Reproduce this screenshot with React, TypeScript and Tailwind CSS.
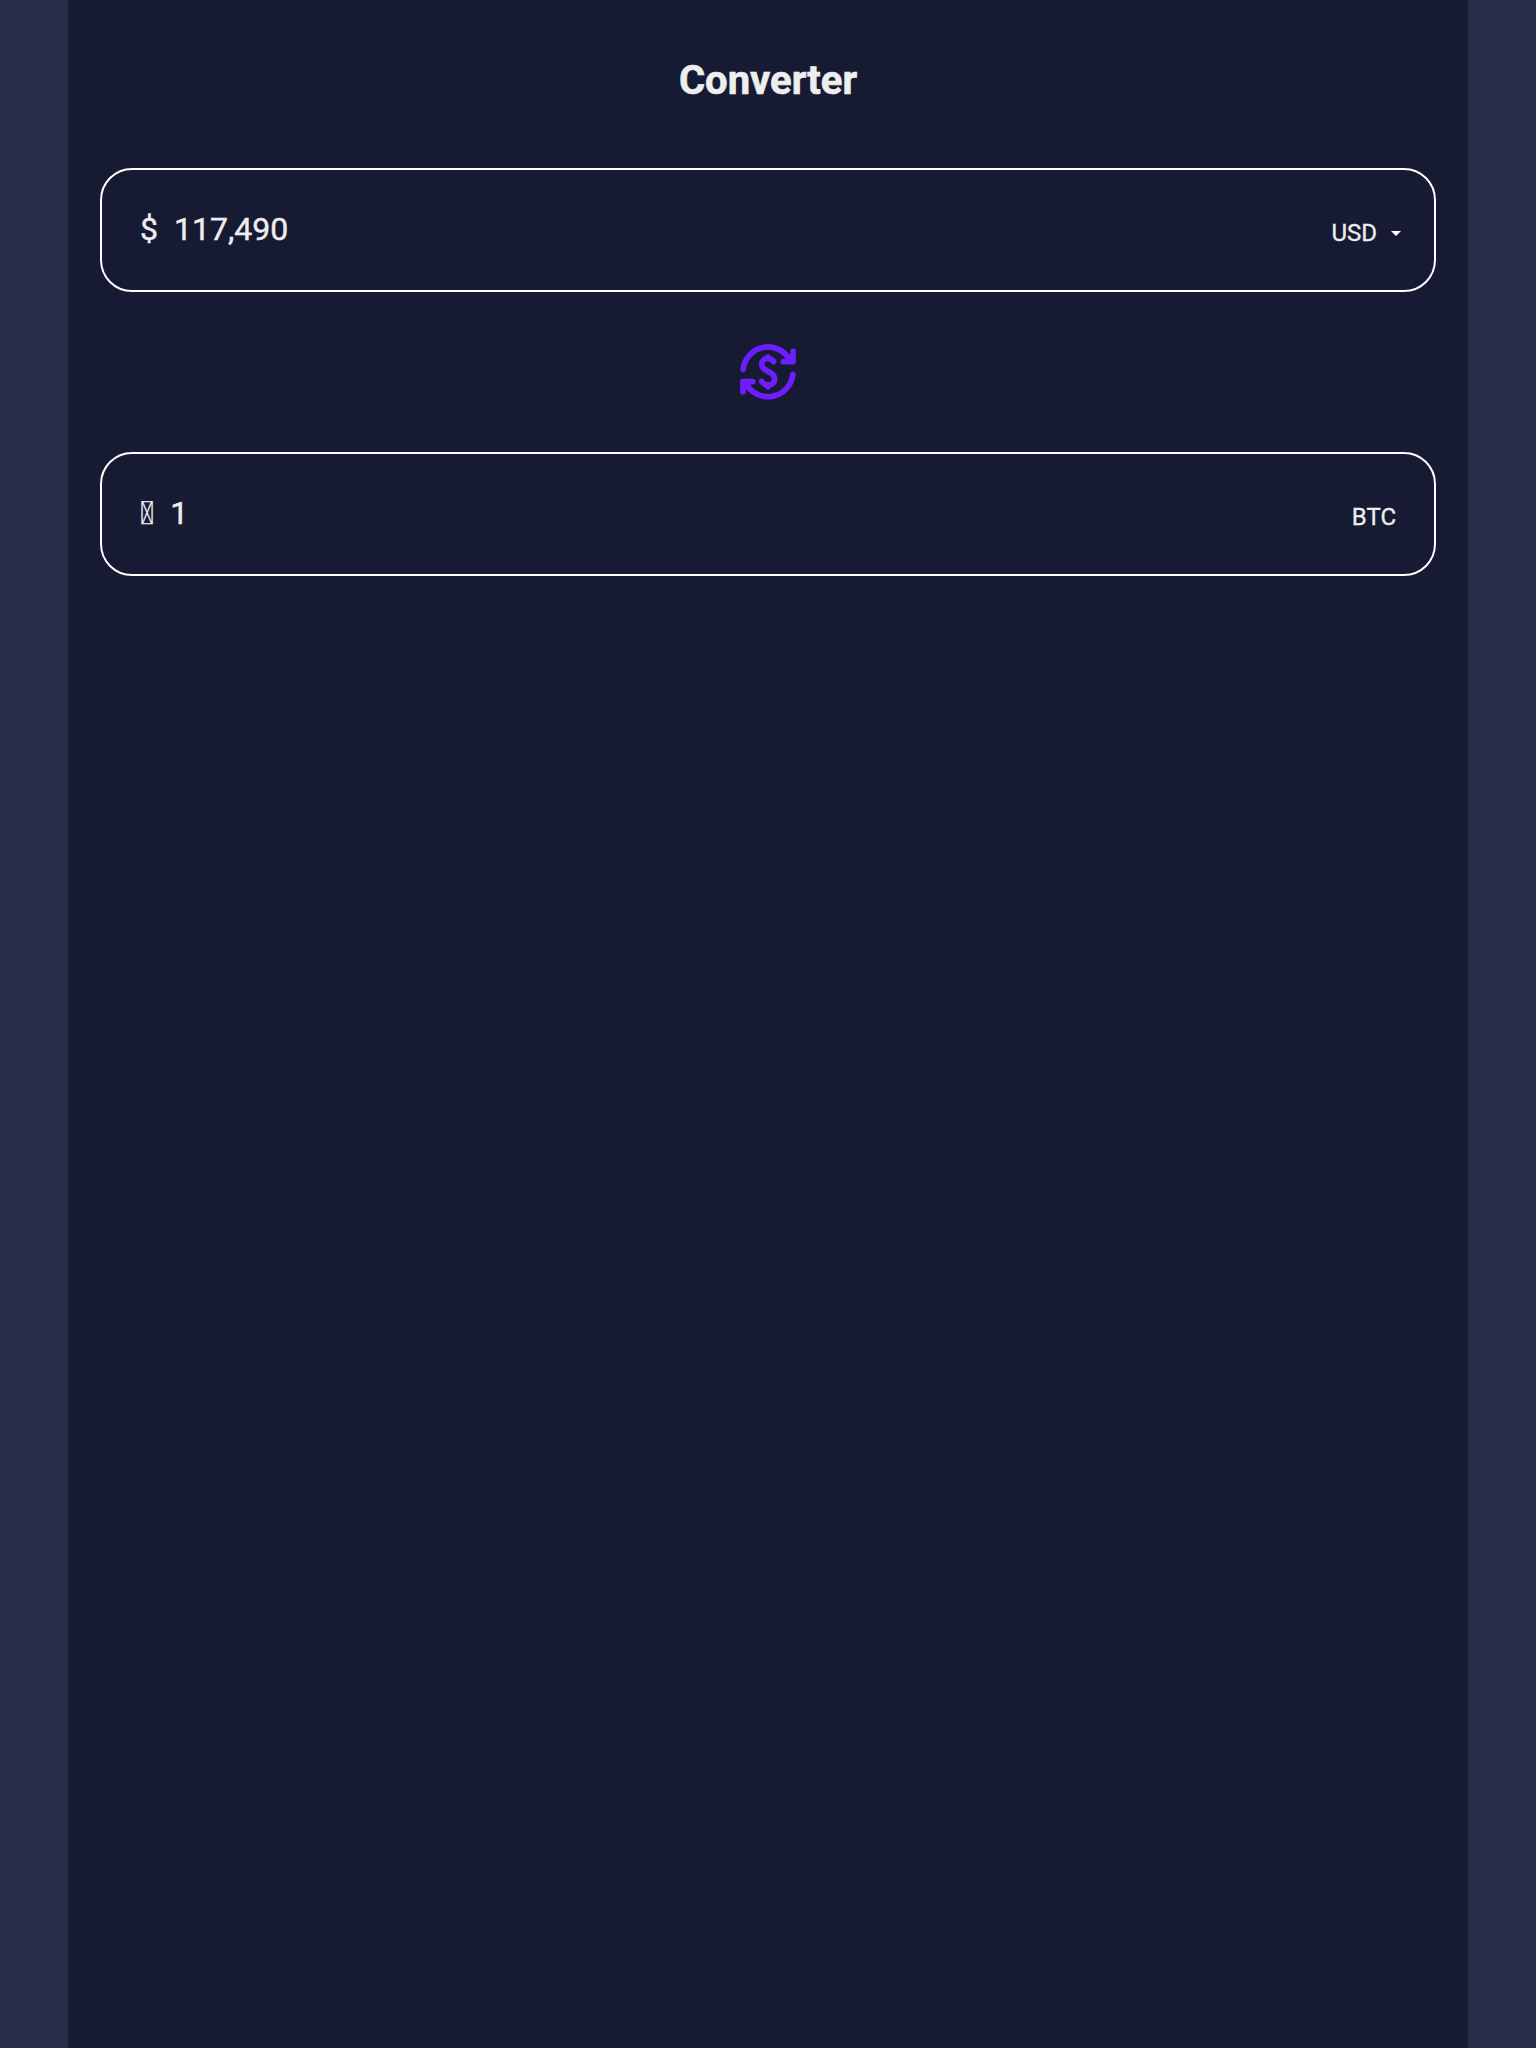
import type { ReactNode } from "react";

function ConvertIcon() {
  return (
    <svg
      viewBox="0 0 240 240"
      className="h-20 w-20"
      fill="none"
      stroke="#6f1dfd"
      strokeWidth="17"
      strokeLinecap="round"
      strokeLinejoin="round"
    >
      <path d="M45.5 112A75 75 0 0 1 184.5 81.5" />
      <path d="M195 58V89H164Z" fill="#6f1dfd" stroke="none" />
      <path d="M195 58V89H166" />
      <path d="M194.5 127A75 75 0 0 1 55.5 157.5" />
      <path d="M45 179V149H74Z" fill="#6f1dfd" stroke="none" />
      <path d="M45 179V149H74" />
      <path d="M137 89C132 82 126 79 119 79C109 79 101 86 101 97C101 108 109 113 120 118C131 123 140 129 140 141C140 152 132 159 121 159C112 159 105 155 101 148" />
      <path d="M120 75V79M120 160V164" />
    </svg>
  );
}

function Field({ symbol, amount, children }: { symbol: string; amount: string; children: ReactNode }) {
  return (
    <div className="flex h-[124px] items-center justify-between rounded-[32px] border-2 border-white pl-[38px]">
      <div className="flex gap-4 pb-0.5 text-[32px] leading-10 [-webkit-text-stroke:0.4px_#eeeeee]">
        <span>{symbol}</span>
        <span>{amount}</span>
      </div>
      <div className="flex items-center pt-[5px] text-2xl leading-8 [-webkit-text-stroke:0.3px_#eeeeee]">{children}</div>
    </div>
  );
}

export default function App() {
  return (
    <div className="flex min-h-screen justify-center bg-[#2a2d48] font-['Roboto',sans-serif] text-[#eeeeee]">
      <main className="flex w-[1400px] flex-col bg-[#161b33] px-8">
        <h1 className="mt-[57px] text-center text-[40px] leading-[48px] font-bold [-webkit-text-stroke:0.6px_#eeeeee]">
          Converter
        </h1>
        <div className="mt-[63px]">
          <Field symbol="$" amount="117,490">
            <span>USD</span>
            <svg viewBox="0 0 10 5" className="mt-0.5 mr-[33px] ml-[14px] h-[5px] w-[10px] fill-white">
              <path d="M0 0H10L5 5Z" />
            </svg>
          </Field>
        </div>
        <div className="flex h-40 items-center justify-center">
          <ConvertIcon />
        </div>
        <Field symbol={"\u{10FFF0}"} amount="1">
          <span className="mr-[38px]">BTC</span>
        </Field>
      </main>
    </div>
  );
}
